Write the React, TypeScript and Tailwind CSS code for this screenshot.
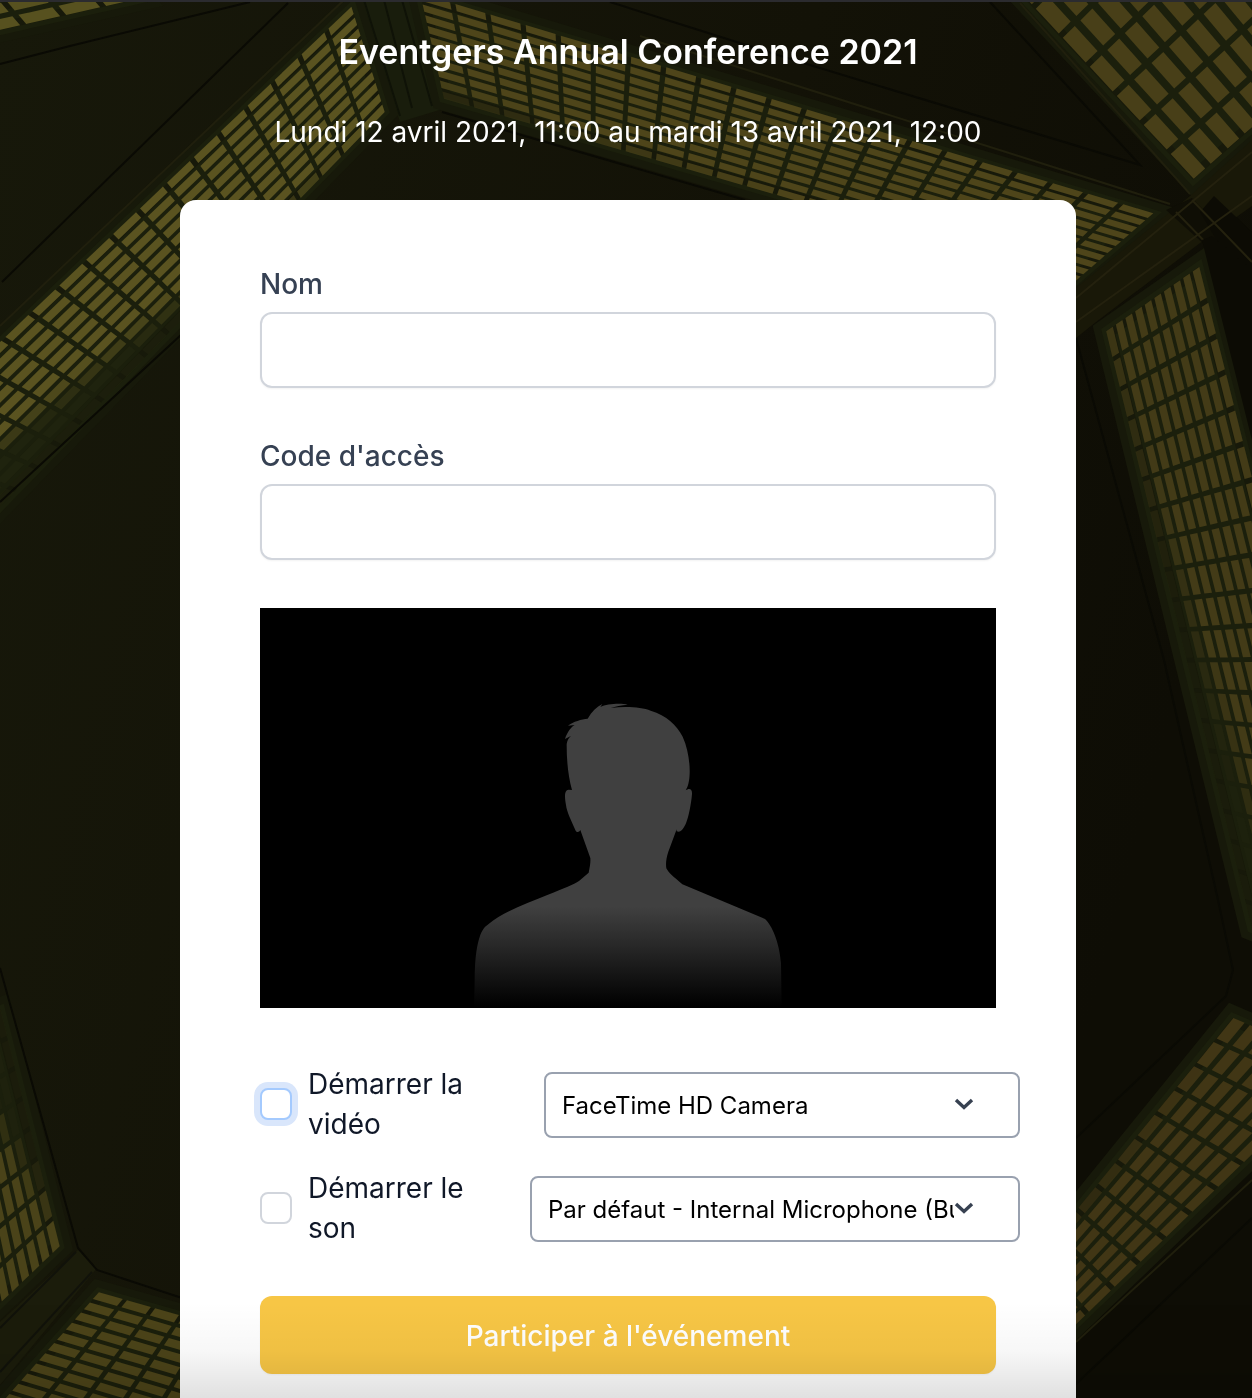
import { useId } from 'react';

type Point = [number, number];

interface LatticeProps {
  corners: [Point, Point, Point, Point];
  cols: number;
  rows: number;
  color: string;
  // depth (0..1) where the cells start to go dark, at each end of the panel
  fade?: [number, number];
}

const mix = (a: Point, b: Point, t: number): Point => [a[0] + (b[0] - a[0]) * t, a[1] + (b[1] - a[1]) * t];

const toPoints = (list: Point[]) => list.map((p) => `${p[0].toFixed(1)},${p[1].toFixed(1)}`).join(' ');

// Window panel: a quad cut in cols x rows slats
const Lattice: React.FC<LatticeProps> = ({ corners, cols, rows, color, fade = [2, 2] }) => {
  const [a, b, c, d] = corners;
  const at = (u: number, v: number) => mix(mix(a, b, u), mix(d, c, u), v);
  const cells = [];

  for (let i = 0; i < cols; i++) {
    for (let j = 0; j < rows; j++) {
      const u0 = (i + 0.08) / cols;
      const u1 = (i + 0.93) / cols;
      const v0 = (j + 0.15) / rows;
      const v1 = (j + 0.83) / rows;
      const limit = fade[0] + (fade[1] - fade[0]) * (i / cols);
      const opacity = Math.max(0.08, Math.min(1, 1 - (v1 - limit) * 5));
      cells.push(
        <polygon
          key={`${i}-${j}`}
          points={toPoints([at(u0, v0), at(u1, v0), at(u1, v1), at(u0, v1)])}
          fill={color}
          opacity={opacity}
        />
      );
    }
  }

  return (
    <g>
      <polygon points={toPoints(corners)} fill="#1b1f0c" stroke="#17190a" strokeWidth="20" />
      <polygon points={toPoints(corners)} fill="none" stroke="#1b1f0c" strokeWidth="5" />
      {cells}
    </g>
  );
};

const Backdrop: React.FC = () => (
  <svg
    className="absolute inset-0 w-full h-full"
    viewBox="0 0 1252 1398"
    preserveAspectRatio="xMidYMid slice"
    aria-hidden="true"
  >
    <defs>
      <linearGradient id="wall" x1="0" y1="0" x2="1" y2="0.3">
        <stop offset="0" stopColor="#17180a" />
        <stop offset="0.6" stopColor="#131207" />
        <stop offset="1" stopColor="#0e0d05" />
      </linearGradient>
      <filter id="soft" x="-5%" y="-5%" width="110%" height="110%" colorInterpolationFilters="sRGB">
        <feGaussianBlur stdDeviation="0.7" />
      </filter>
    </defs>
    <rect width="1252" height="1398" fill="url(#wall)" />
    <g filter="url(#soft)">
      {/* Pillar between the two upper panels */}
      <polygon points="360,0 425,0 446,108 400,122" fill="#191d0c" />

      <Lattice corners={[[-78, 18], [122, -27], [145, 0], [-55, 45]]} cols={5} rows={2} color="#57511f" />
      <Lattice corners={[[353, 3], [-187, 518], [-47, 558], [387, 112]]} cols={20} rows={10} color="#5a5320" fade={[1, 0.45]} />
      <Lattice corners={[[417, -9], [1157, 213], [1076, 283], [442, 100]]} cols={21} rows={10} color="#4e451a" fade={[0.85, 1.1]} />
      <Lattice corners={[[977, -49], [1193, 183], [1329, 63], [1121, -199]]} cols={8} rows={8} color="#483f18" />
      <path d="M364 0L400 116M384 0L412 108M402 0L432 106" stroke="#0f1207" strokeWidth="2" />

      {/* Beams crossing on the right */}
      <polygon points="1252,140 1190,196 1076,288 1076,338 1096,322 1204,240 1252,206" fill="#191808" />
      <polygon points="1166,210 1192,198 1228,236 1206,246" fill="#0f0e05" />
      <polygon points="1200,212 1214,196 1252,232 1252,300" fill="#0c0b04" />
      <path d="M1076 298L1252 152M1076 322L1252 196M1176 212L1252 290M1192 200L1252 262" stroke="#24210e" strokeWidth="2" fill="none" />

      <Lattice corners={[[1200, 263], [1380, 983], [1250, 930], [1104, 330]]} cols={20} rows={10} color="#433b17" fade={[0.95, 0.6]} />
      <polygon points="1202,240 1212,236 1252,270 1252,440" fill="#0c0b04" />
      <Lattice corners={[[-40, 1345], [-94, 1050], [2, 1007], [62, 1247]]} cols={8} rows={10} color="#4a4319" fade={[1, 0.35]} />
      <polygon points="78,1250 97,1268 0,1385 0,1322" fill="#1b1c0b" />
      <path d="M92 1272L0 1372M76 1252L0 1328" stroke="#11120a" strokeWidth="2" />
      <Lattice corners={[[98, 1290], [238, 1330], [165, 1465], [-10, 1412]]} cols={5} rows={12} color="#4c4419" />
      <Lattice corners={[[1036, 1365], [1348, 1065], [1232, 1015], [997, 1305]]} cols={12} rows={7} color="#413615" fade={[0.85, 1]} />

      {/* Joints in the concrete */}
      <path
        d="M0 64L70 46L250 2M288 3L2 282M610 2L800 62L1140 165L990 2M0 502L182 334M442 112L745 200M0 968L78 1248L97 1270L182 1298M1076 338L1164 660L1218 900L1233 970L1226 996L1076 1138M1252 1218L1076 1384"
        stroke="#0a0a04"
        strokeWidth="2"
        fill="none"
      />
      <path d="M344 0L0 326M640 36L1170 204M1020 3L1190 194M1252 1180L1076 1342" stroke="#201f0d" strokeWidth="2" fill="none" />
    </g>
  </svg>
);

const Silhouette: React.FC = () => (
  <svg className="w-[308px] h-[318px]" viewBox="42 0 924 954" aria-hidden="true">
    <defs>
      <linearGradient id="body" gradientUnits="userSpaceOnUse" x1="0" y1="650" x2="0" y2="950">
        <stop offset="0" stopColor="#404040" />
        <stop offset="0.4" stopColor="#272727" />
        <stop offset="1" stopColor="#000000" />
      </linearGradient>
    </defs>
    <path
      fill="url(#body)"
      d="M42 954L44 870C44 800 52 760 60 738C66 722 72 712 85 703C130 665 200 640 262 615C310 595 345 582 358 572L386 548C390 530 392 515 391 504L361 420C358 427 350 428 347 422C335 395 320 365 318 345C314 322 312 300 326 299L336 300C325 260 320 215 320 165C320 155 326 142 334 137L315 147C322 125 335 110 344 105L324 107C340 95 365 87 383 86C395 65 410 50 427 42L421 51C440 42 480 39 503 44C485 45 465 49 452 54C500 48 545 52 572 62C620 77 650 105 668 140C684 175 690 220 689 250C688 275 684 290 677 301C685 295 697 293 696 312C693 345 686 380 678 400C670 417 662 430 650 424L650 418L625 485C618 505 617 522 619 535C625 548 640 560 667 583L915 687C935 705 958 755 963 820L965 954Z"
    />
  </svg>
);

const TextField: React.FC<{ label: string; name: string }> = ({ label, name }) => {
  const id = useId();

  return (
    <div>
      <label htmlFor={id} className="block text-[28px] leading-10 font-medium text-gray-700">
        {label}
      </label>
      <input
        id={id}
        name={name}
        type="text"
        className="mt-2 block w-full h-19 px-6 text-[28px] bg-white border-2 border-gray-300 rounded-xl shadow-xs outline-none"
      />
    </div>
  );
};

interface DeviceRowProps {
  label: string;
  device: string;
  checkboxClass: string;
  selectClass: string;
}

const DeviceRow: React.FC<DeviceRowProps> = ({ label, device, checkboxClass, selectClass }) => {
  const id = useId();

  return (
    <div className="flex items-center justify-between -mr-6">
      <div className="flex items-center gap-4">
        <input id={id} type="checkbox" className={`appearance-none shrink-0 size-8 bg-white border-2 rounded-lg ${checkboxClass}`} />
        <label htmlFor={id} className="w-40 text-[28px] leading-10 text-gray-900">
          {label}
        </label>
      </div>
      <div className={`relative mt-0.5 ${selectClass}`}>
        <select
          aria-label={device}
          className="appearance-none block w-full h-[66px] pl-4 pr-16 pt-0.5 text-2xl text-black bg-white border-2 border-gray-400 rounded-lg"
        >
          <option>{device}</option>
        </select>
        <svg
          className="absolute right-[46px] top-1/2 -translate-y-1/2 w-5 h-4 pointer-events-none"
          viewBox="0 0 20 16"
          fill="none"
          stroke="#374151"
          strokeWidth="3.4"
          aria-hidden="true"
        >
          <path d="M2 3L10 10.5L18 3" />
        </svg>
      </div>
    </div>
  );
};

const App: React.FC = () => {
  return (
    <main className="relative overflow-hidden bg-[#141408] font-['Inter',sans-serif]">
      <Backdrop />

      <div className="relative border-t-2 border-[#2b2b2f] pt-[30px] pl-1">
        <header className="text-center text-white">
          <h1 className="text-[34px] leading-10 font-semibold">Eventgers Annual Conference 2021</h1>
          <p className="mt-10 text-[28px] leading-10">Lundi 12 avril 2021, 11:00 au mardi 13 avril 2021, 12:00</p>
        </header>

        <form className="mt-12 mx-auto max-w-4xl px-20 pt-16 pb-6 bg-white rounded-t-2xl">
          <div className="flex flex-col gap-12">
            <TextField label="Nom" name="name" />
            <TextField label="Code d'accès" name="code" />

            <div className="flex items-end justify-center h-100 bg-black">
              <Silhouette />
            </div>
          </div>

          <div className="mt-14 flex flex-col gap-6">
            <DeviceRow
              label="Démarrer la vidéo"
              device="FaceTime HD Camera"
              checkboxClass="border-[#a4cafe] ring-6 ring-[#d9e6fb]"
              selectClass="w-[476px]"
            />
            <DeviceRow
              label="Démarrer le son"
              device="Par défaut - Internal Microphone (Built-in)"
              checkboxClass="border-gray-300"
              selectClass="w-[490px]"
            />
          </div>

          <button
            type="submit"
            className="mt-12 block w-full h-[78px] pt-0.5 text-[28px] font-medium text-white bg-[#f7c645] rounded-xl shadow-xs"
          >
            Participer à l'événement
          </button>
        </form>
      </div>

      {/* Shade at the foot of the page */}
      <div className="absolute inset-x-0 bottom-0 h-24 bg-linear-to-b from-transparent via-black/3 to-black/12 pointer-events-none"></div>
    </main>
  );
};

export default App;
